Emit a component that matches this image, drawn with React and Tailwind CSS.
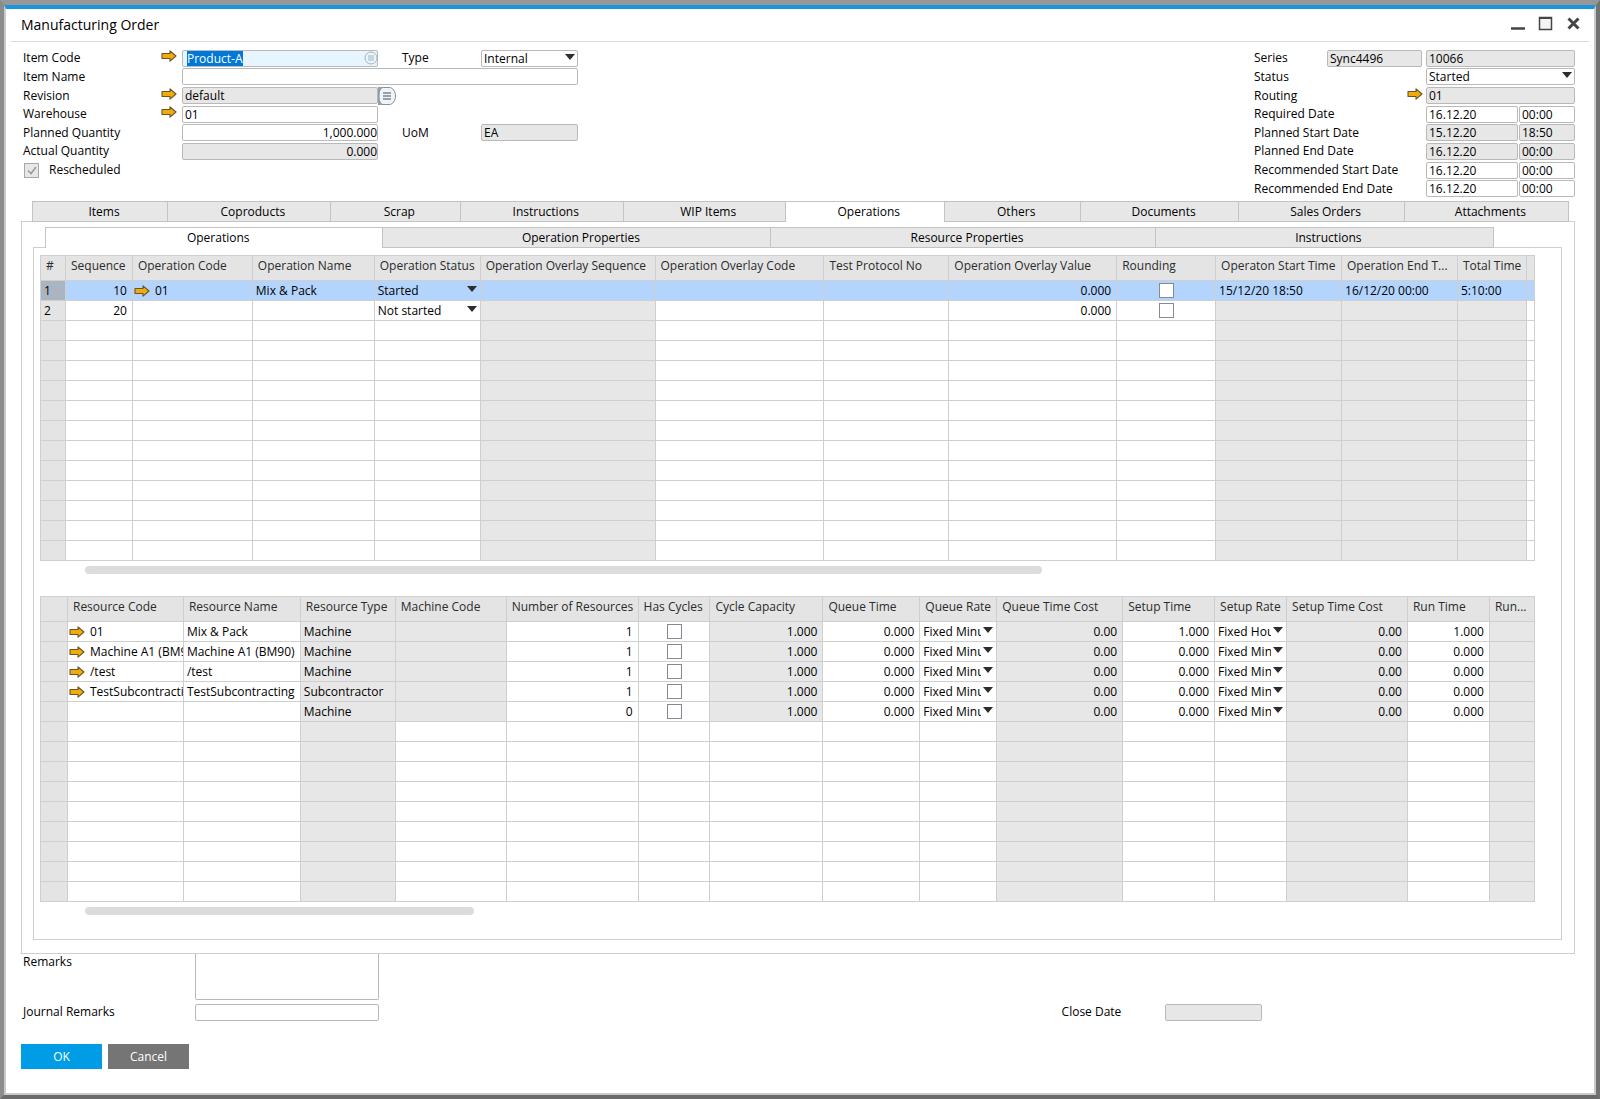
import React, {useEffect, useRef} from 'react'

const FIELD = 'h-[17px] min-w-0 rounded-xs border border-[#b9b9b9] px-[2px] text-xs leading-[15px] outline-none'

const operationColumns = [
    {key: 'no', title: '#', width: 25, head: true},
    {key: 'sequence', title: 'Sequence', width: 67, align: 'right'},
    {key: 'code', title: 'Operation Code', width: 120, type: 'link'},
    {key: 'name', title: 'Operation Name', width: 122},
    {key: 'status', title: 'Operation Status', width: 106, type: 'select'},
    {key: 'overlaySequence', title: 'Operation Overlay Sequence', width: 175, readOnly: true},
    {key: 'overlayCode', title: 'Operation Overlay Code', width: 169},
    {key: 'protocol', title: 'Test Protocol No', width: 125},
    {key: 'overlayValue', title: 'Operation Overlay Value', width: 168, align: 'right'},
    {key: 'rounding', title: 'Rounding', width: 99, type: 'check'},
    {key: 'start', title: 'Operaton Start Time', width: 126, readOnly: true},
    {key: 'end', title: 'Operation End T...', width: 116, readOnly: true},
    {key: 'total', title: 'Total Time', width: 69, readOnly: true},
    {key: 'rest', title: '', width: 8},
]

const operations = [
    {
        no: '1', sequence: '10', code: '01', name: 'Mix & Pack', status: 'Started', overlayValue: '0.000',
        rounding: false, start: '15/12/20 18:50', end: '16/12/20 00:00', total: '5:10:00', selected: true,
    },
    {no: '2', sequence: '20', status: 'Not started', overlayValue: '0.000', rounding: false},
]

const resourceColumns = [
    {key: 'no', title: '', width: 27, head: true},
    {key: 'code', title: 'Resource Code', width: 116, type: 'link'},
    {key: 'name', title: 'Resource Name', width: 117},
    {key: 'type', title: 'Resource Type', width: 95, readOnly: true},
    {key: 'machine', title: 'Machine Code', width: 111, readOnlyFilled: true},
    {key: 'count', title: 'Number of Resources', width: 132, align: 'right'},
    {key: 'cycles', title: 'Has Cycles', width: 72, type: 'check'},
    {key: 'capacity', title: 'Cycle Capacity', width: 113, align: 'right', readOnlyFilled: true},
    {key: 'queueTime', title: 'Queue Time', width: 97, align: 'right'},
    {key: 'queueRate', title: 'Queue Rate', width: 77, type: 'select'},
    {key: 'queueCost', title: 'Queue Time Cost', width: 126, align: 'right', readOnly: true},
    {key: 'setupTime', title: 'Setup Time', width: 92, align: 'right'},
    {key: 'setupRate', title: 'Setup Rate', width: 72, type: 'select'},
    {key: 'setupCost', title: 'Setup Time Cost', width: 121, align: 'right', readOnly: true},
    {key: 'runTime', title: 'Run Time', width: 82, align: 'right'},
    {key: 'runRate', title: 'Run...', width: 45, readOnly: true},
]

const resourceDefaults = {
    count: '1', cycles: false, capacity: '1.000', queueTime: '0.000', queueRate: 'Fixed Minutes',
    queueCost: '0.00', setupTime: '0.000', setupRate: 'Fixed Minutes', setupCost: '0.00', runTime: '0.000',
}

const resources = [
    {...resourceDefaults, code: '01', name: 'Mix & Pack', type: 'Machine', setupTime: '1.000', setupRate: 'Fixed Hours', runTime: '1.000'},
    {...resourceDefaults, code: 'Machine A1 (BM90)', name: 'Machine A1 (BM90)', type: 'Machine'},
    {...resourceDefaults, code: '/test', name: '/test', type: 'Machine'},
    {...resourceDefaults, code: 'TestSubcontracting', name: 'TestSubcontracting', type: 'Subcontractor'},
    {...resourceDefaults, type: 'Machine', count: '0'},
]

const mainTabs = [
    {title: 'Items', width: 134},
    {title: 'Coproducts', width: 163},
    {title: 'Scrap', width: 129},
    {title: 'Instructions', width: 163},
    {title: 'WIP Items', width: 163},
    {title: 'Operations', width: 159},
    {title: 'Others', width: 135},
    {title: 'Documents', width: 159},
    {title: 'Sales Orders', width: 166},
    {title: 'Attachments', width: 165},
]

const operationTabs = [
    {title: 'Operations', width: 337},
    {title: 'Operation Properties', width: 389},
    {title: 'Resource Properties', width: 385},
    {title: 'Instructions', width: 338},
]

function LinkArrow() {
    return (
        <svg viewBox="0 0 16 12" className="h-3 w-4 shrink-0" aria-hidden="true">
            <path d="M1 3.500h8V.8L15 6l-6 5.2V8.500H1z" fill="#efac0c" stroke="#6b5527" strokeWidth="1.1" strokeLinejoin="round" />
        </svg>
    )
}

function Caret() {
    return (
        <svg viewBox="0 0 10 6" className="pointer-events-none absolute top-1 right-[3px] h-[6px] w-[10px]" aria-hidden="true">
            <path d="M0 0h10L5 6z" fill="#2d2d2d" />
        </svg>
    )
}

function Label({htmlFor, children}) {
    return <label htmlFor={htmlFor} className="whitespace-nowrap">{children}</label>
}

function Field({id, value, readOnly, label, className = ''}) {
    return (
        <input
            id={id}
            aria-label={label}
            defaultValue={value}
            readOnly={readOnly}
            className={`${FIELD} ${readOnly ? 'bg-[#e7e7e7]' : 'bg-white'} ${className}`}
        />
    )
}

function Select({id, value, className = ''}) {
    return (
        <div className={`relative flex min-w-0 ${className}`}>
            <select id={id} className={`${FIELD} w-full appearance-none bg-white`} defaultValue={value}>
                <option>{value}</option>
            </select>
            <Caret />
        </div>
    )
}

function LinkButton({label}) {
    return (
        <button type="button" aria-label={label} className="mb-1 flex w-4">
            <LinkArrow />
        </button>
    )
}

function ItemCode() {
    const input = useRef(null)

    useEffect(() => {
        input.current.focus()
        input.current.select()
    }, [])

    return (
        <div className="relative flex">
            <input
                id="itemCode"
                ref={input}
                defaultValue="Product-A"
                className={`${FIELD} w-full bg-[#e6f5fe] pl-1 selection:bg-[#0078d7] selection:text-white`}
            />
            <svg viewBox="0 0 14 14" className="absolute top-px right-0 size-[14px]" fill="none" stroke="#a9b4bb" aria-hidden="true">
                <circle cx="7" cy="7" r="6" />
                <path d="M4 5h6M4 7h6M4 9h6" />
            </svg>
        </div>
    )
}

function OrderForm() {
    return (
        <div className="grid min-h-[149px] grid-cols-[138px_21px_196px_24px_79px_97px] grid-rows-8 items-center">
            <Label htmlFor="itemCode">Item Code</Label>
            <LinkButton label="Open item" />
            <ItemCode />
            <span />
            <Label htmlFor="type">Type</Label>
            <Select id="type" value="Internal" />

            <Label htmlFor="itemName">Item Name</Label>
            <Field id="itemName" value="" className="col-span-4 col-start-3" />

            <Label htmlFor="revision">Revision</Label>
            <LinkButton label="Open revision" />
            <Field id="revision" value="default" readOnly />
            <button type="button" aria-label="Choose revision" className="col-span-3 h-[18px] w-[18px]">
                <svg viewBox="0 0 18 18" className="size-[18px]" aria-hidden="true">
                    <path d="M0 0h9v18H0z" fill="#8fa1b1" />
                    <path d="M5 .5h6c4 0 6.500 4 6.500 8.500s-2.500 8.500-6.500 8.500H5C2.500 17.500 1 14 1 9S2.500.5 5 .5z" fill="#f0f4f7" stroke="#7d92a5" />
                    <path d="M5 6h8M5 9h8M5 12h8" stroke="#3f4a55" strokeWidth="1.200" />
                </svg>
            </button>

            <Label htmlFor="warehouse">Warehouse</Label>
            <LinkButton label="Open warehouse" />
            <Field id="warehouse" value="01" />
            <span className="col-span-3" />

            <Label htmlFor="plannedQty">Planned Quantity</Label>
            <span />
            <Field id="plannedQty" value="1,000.000" className="pr-0 text-right" />
            <span />
            <Label htmlFor="uom">UoM</Label>
            <Field id="uom" value="EA" readOnly />

            <Label htmlFor="actualQty">Actual Quantity</Label>
            <span />
            <Field id="actualQty" value="0.000" readOnly className="pr-0 text-right" />
            <span className="col-span-3" />

            <div className="col-span-6 flex items-center gap-[10px]">
                <input
                    id="rescheduled"
                    type="checkbox"
                    disabled
                    defaultChecked
                    className="ml-px size-[15px] appearance-none border border-[#a8a8a8] bg-[#e7e7e7]"
                />
                <svg viewBox="0 0 15 15" className="-ml-[25px] size-[15px]" fill="none" stroke="#9a9a9a" strokeWidth="1.500" aria-hidden="true">
                    <path d="M4 7.500l3 3 5-6.500" />
                </svg>
                <Label htmlFor="rescheduled">Rescheduled</Label>
            </div>
        </div>
    )
}

const dates = [
    {id: 'required', label: 'Required Date', date: '16.12.20', time: '00:00'},
    {id: 'plannedStart', label: 'Planned Start Date', date: '15.12.20', time: '18:50', readOnly: true},
    {id: 'plannedEnd', label: 'Planned End Date', date: '16.12.20', time: '00:00', readOnly: true},
    {id: 'recStart', label: 'Recommended Start Date', date: '16.12.20', time: '00:00'},
    {id: 'recEnd', label: 'Recommended End Date', date: '16.12.20', time: '00:00'},
]

function StatusForm() {
    return (
        <div className="grid min-h-[149px] grid-cols-[73px_99px_93px_56px] grid-rows-8 items-center">
            <Label htmlFor="series">Series</Label>
            <Field id="series" value="Sync4496" readOnly className="mr-1" />
            <Field label="Series number" value="10066" readOnly className="col-span-2" />

            <Label htmlFor="status">Status</Label>
            <span />
            <Select id="status" value="Started" className="col-span-2" />

            <Label htmlFor="routing">Routing</Label>
            <span className="justify-self-end pr-[3px]">
                <LinkButton label="Open routing" />
            </span>
            <Field id="routing" value="01" readOnly className="col-span-2" />

            {dates.map((row) => (
                <React.Fragment key={row.id}>
                    <div className="col-span-2 flex">
                        <Label htmlFor={row.id}>{row.label}</Label>
                    </div>
                    <Field id={row.id} value={row.date} readOnly={row.readOnly} className="mr-px" />
                    <Field label={`${row.label} time`} value={row.time} readOnly={row.readOnly} />
                </React.Fragment>
            ))}
        </div>
    )
}

function Tabs({tabs, active, className}) {
    return (
        <div role="tablist" className={`flex h-[21px] ${className}`}>
            {tabs.map((tab) => (
                <button
                    key={tab.title}
                    type="button"
                    role="tab"
                    aria-selected={tab.title === active}
                    style={{flex: `${tab.width} 1 0`}}
                    className={`min-w-0 border-t border-l border-[#c3c3c3] pl-2 last:border-r ${tab.title === active ? 'bg-white' : 'border-b bg-[#e7e7e7]'}`}
                >
                    {tab.title}
                </button>
            ))}
        </div>
    )
}

function Cell({column, row}) {
    const value = row[column.key]
    if (value === undefined) return null

    if (column.type === 'check') {
        return (
            <input
                type="checkbox"
                aria-label={column.title}
                defaultChecked={value}
                className="mx-auto block size-[15px] appearance-none border border-[#858b90] bg-white"
            />
        )
    }
    if (column.type === 'select') {
        return (
            <div className="relative flex">
                <select aria-label={column.title} defaultValue={value} className="h-[18px] w-full appearance-none overflow-hidden pr-[15px] pl-[3px] outline-none">
                    <option>{value}</option>
                </select>
                <Caret />
            </div>
        )
    }
    if (column.type === 'link') {
        return (
            <div className="flex items-center gap-[5px] pl-px whitespace-nowrap">
                <LinkArrow />
                <span className="min-w-0 overflow-hidden">{value}</span>
            </div>
        )
    }
    return <div className="overflow-hidden px-[3px] whitespace-nowrap">{value}</div>
}

function cellColor(column, row) {
    if (column.head) return row.selected ? 'bg-[#abb5c1]' : 'bg-[#e4e4e4]'
    if (row.selected) return 'bg-[#b3d4fc]'
    if (column.readOnly || (column.readOnlyFilled && row.type)) return 'bg-[#e7e7e7]'
    return 'bg-white'
}

function DataTable({label, columns, rows}) {
    const total = columns.reduce((sum, column) => sum + column.width, 0)
    const lines = [...rows, ...Array(14 - rows.length).fill({})]

    return (
        <table aria-label={label} className="w-full table-fixed border-collapse">
            <colgroup>
                {columns.map((column) => (
                    <col key={column.key} style={{width: `${(column.width / total) * 100}%`}} />
                ))}
            </colgroup>
            <thead>
                <tr className="h-[25px]">
                    {columns.map((column) => (
                        <th key={column.key} className="overflow-hidden border border-[#cfcfcf] bg-[#e4e4e4] p-0 pb-1 pl-[5px] text-left font-normal whitespace-nowrap text-[#2b2b2b]">
                            {column.title}
                        </th>
                    ))}
                </tr>
            </thead>
            <tbody>
                {lines.map((row, i) => (
                    <tr key={i} className="h-5">
                        {columns.map((column) => (
                            <td
                                key={column.key}
                                className={`border border-[#cfcfcf] p-0 leading-[18px] ${cellColor(column, row)} ${column.align === 'right' ? 'pr-[2px] text-right' : ''}`}
                            >
                                <Cell column={column} row={row} />
                            </td>
                        ))}
                    </tr>
                ))}
            </tbody>
        </table>
    )
}

function TitleBar() {
    return (
        <header className="mx-[5px] flex h-8 items-center justify-between border-b border-[#d9d9d9] pr-2 pb-px pl-[10px]">
            <h1 className="text-sm leading-5">Manufacturing Order</h1>
            <div className="flex items-center gap-[13px] pb-[3px] text-[#454545]">
                <button type="button" aria-label="Minimize">
                    <svg viewBox="0 0 15 15" className="size-[15px]"><path d="M1 12.500h14" stroke="currentColor" strokeWidth="2.500" /></svg>
                </button>
                <button type="button" aria-label="Maximize">
                    <svg viewBox="0 0 15 15" className="size-[15px]">
                        <path d="M1.500 1.500h12v12h-12z" fill="#f4f4f4" stroke="currentColor" strokeWidth="1.500" />
                        <path d="M1 2h13" stroke="currentColor" strokeWidth="2" />
                    </svg>
                </button>
                <button type="button" aria-label="Close">
                    <svg viewBox="0 0 15 15" className="size-[15px]"><path d="M2.500 2.500l10 10M12.500 2.500l-10 10" stroke="currentColor" strokeWidth="3" /></svg>
                </button>
            </div>
        </header>
    )
}

export default function App() {
    return (
        <div className="flex min-h-screen flex-col border-4 border-t-[5px] border-t-[#979797] border-r-[#727272] border-b-[#6a6a6a] border-l-[#8c8c8c] font-['Open_Sans','Noto_Sans',sans-serif] text-xs leading-4 text-black">
            <div className="flex grow flex-col border-2 border-t-4 border-[#c6cbcb] border-t-[#1a96dc] bg-white pt-px">
                <TitleBar />

                <main className="px-[15px]">
                    <div className="flex justify-between pt-[7px] pr-[4px] pl-[2px]">
                        <OrderForm />
                        <StatusForm />
                    </div>

                    <section className="mt-[3px] mr-1">
                        <Tabs tabs={mainTabs} active="Operations" className="mr-[6px] ml-[11px]" />
                        <div className="-mt-px border border-[#cfcfcf] pt-[5px] pr-3 pb-[13px] pl-[11px]">
                            <Tabs tabs={operationTabs} active="Operations" className="mr-[68px] ml-3" />
                            <div className="-mt-px border border-[#cfcfcf] pt-[7px] pr-[26px] pb-6 pl-[6px]">
                                <DataTable label="Operations" columns={operationColumns} rows={operations} />
                                <div className="mt-[5px] ml-[3%] h-2 w-[64%] rounded-full bg-[#dcdcdc]" />
                                <div className="mt-[22px]">
                                    <DataTable label="Resources" columns={resourceColumns} rows={resources} />
                                </div>
                                <div className="mt-[5px] ml-[3%] h-2 w-[26%] rounded-full bg-[#dcdcdc]" />
                            </div>
                        </div>
                    </section>

                    <div className="flex items-end justify-between pl-[2px]">
                        <div className="grid grid-cols-[172px_184px] gap-y-1">
                            <Label htmlFor="remarks">Remarks</Label>
                            <textarea id="remarks" className="h-[46px] resize-none rounded-b-xs border border-t-0 border-[#b9b9b9] outline-none" />
                            <Label htmlFor="journal">Journal Remarks</Label>
                            <Field id="journal" value="" />
                        </div>
                        <div className="mr-[20.4%] flex">
                            <span className="w-[103px]"><Label htmlFor="closeDate">Close Date</Label></span>
                            <Field id="closeDate" value="" readOnly className="w-[97px]" />
                        </div>
                    </div>

                    <div className="mt-[23px] flex gap-[6px]">
                        <button type="button" className="h-[25px] w-[81px] bg-[#009de6] text-white">OK</button>
                        <button type="button" className="h-[25px] w-[81px] bg-[#757575] text-white">Cancel</button>
                    </div>
                </main>
            </div>
        </div>
    )
}
